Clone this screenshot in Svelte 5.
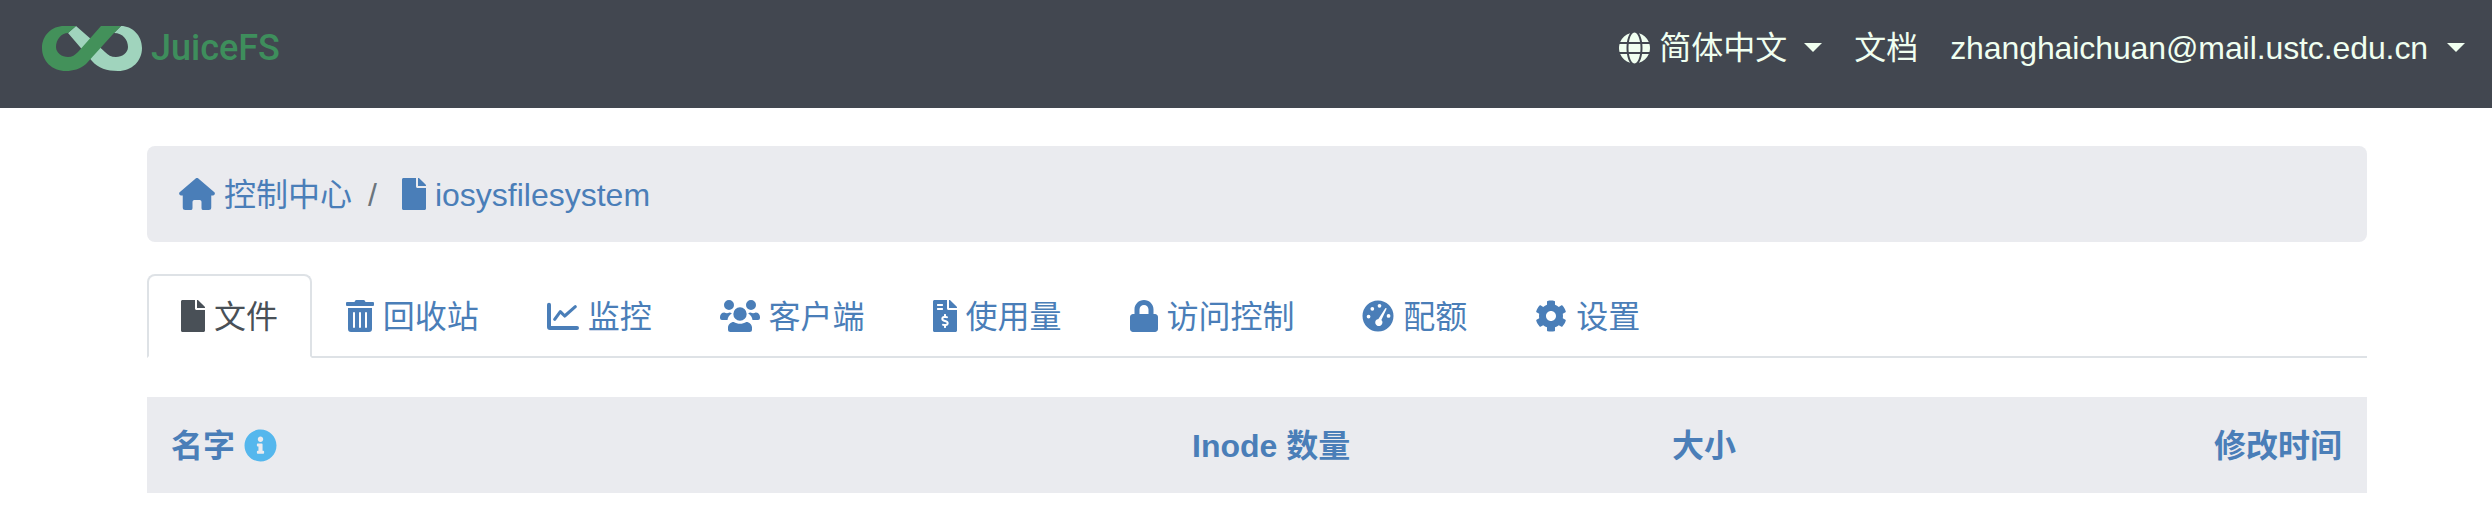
<script>
  const icons = {
    home: [576, "M262 10a40 40 0 0 1 52 0L566 228a30 30 0 0 1-20 50H516V472a40 40 0 0 1-40 40H390a30 30 0 0 1-30-30V380a30 30 0 0 0-30-30H246a30 30 0 0 0-30 30V482a30 30 0 0 1-30 30H100a40 40 0 0 1-40-40V278H30a30 30 0 0 1-20-50Z"],
    file: [384, "M224 136V0H24C10.7 0 0 10.7 0 24v464c0 13.3 10.7 24 24 24h336c13.3 0 24-10.7 24-24V160H248c-13.2 0-24-10.8-24-24zm160-14.1v6.1H256V0h6.1c6.4 0 12.5 2.5 17 7l97.9 98c4.5 4.5 7 10.6 7 16.9z"],
    trash: [448, "M32 464a48 48 0 0 0 48 48h288a48 48 0 0 0 48-48V128H32zm272-256a16 16 0 0 1 32 0v224a16 16 0 0 1-32 0zm-96 0a16 16 0 0 1 32 0v224a16 16 0 0 1-32 0zm-96 0a16 16 0 0 1 32 0v224a16 16 0 0 1-32 0zM432 32H312l-9.4-18.7A24 24 0 0 0 281.1 0H166.8a23.72 23.72 0 0 0-21.4 13.3L136 32H16A16 16 0 0 0 0 48v32a16 16 0 0 0 16 16h416a16 16 0 0 0 16-16V48a16 16 0 0 0-16-16z"],
    chart: [512, "M32 43a32 32 0 0 1 32 32V416H480a32 32 0 0 1 0 64H48a48 48 0 0 1-48-48V75a32 32 0 0 1 32-32z", "M123 309L213 187L283 256L453 107"],
    users: [640, "M144 0a80 80 0 1 0 0 160a80 80 0 1 0 0-160zM496 0a80 80 0 1 0 0 160a80 80 0 1 0 0-160zM320 117a107 107 0 1 0 0 214a107 107 0 1 0 0-214zM168 512a40 40 0 0 1-40-40V440C128 390 170 350 220 350C250 368 285 378 320 378C355 378 390 368 420 350C470 350 512 390 512 440V472a40 40 0 0 1-40 40ZM32 320a32 32 0 0 1-32-32V270C0 230 30 200 70 200C95 215 125 215 150 200C165 200 178 205 190 212C150 240 125 275 120 320ZM608 320a32 32 0 0 0 32-32V270C640 230 610 200 570 200C545 215 515 215 490 200C475 200 462 205 450 212C490 240 515 275 520 320Z"],
    invoice: [384, "M377 105L279.1 7c-4.5-4.5-10.6-7-17-7H256v128h128v-6.1c0-6.3-2.5-12.4-7-16.9zm-153 31V0H24C10.7 0 0 10.7 0 24v464c0 13.3 10.7 24 24 24h336c13.3 0 24-10.7 24-24V160H248c-13.2 0-24-10.8-24-24zM64 72c0-4.42 3.58-8 8-8h80c4.42 0 8 3.58 8 8v16c0 4.42-3.58 8-8 8H72c-4.42 0-8-3.58-8-8V72zm0 80v-16c0-4.42 3.58-8 8-8h80c4.42 0 8 3.58 8 8v16c0 4.42-3.58 8-8 8H72c-4.42 0-8-3.58-8-8zm144 263.88V440c0 4.42-3.58 8-8 8h-16c-4.42 0-8-3.58-8-8v-24.29c-11.29-.58-22.27-4.52-31.37-11.35-3.9-2.93-4.1-8.77-.57-12.14l11.75-11.21c2.77-2.64 6.89-2.76 10.13-.73 3.87 2.42 8.26 3.72 12.82 3.72h28.11c6.5 0 11.8-5.92 11.8-13.19 0-5.95-3.61-11.19-8.77-12.73l-45-13.5c-18.59-5.58-31.58-23.42-31.58-43.39 0-24.52 19.05-44.44 42.67-45.07V232c0-4.42 3.58-8 8-8h16c4.42 0 8 3.58 8 8v24.29c11.29.58 22.27 4.51 31.37 11.35 3.9 2.93 4.1 8.77.57 12.14l-11.75 11.21c-2.77 2.64-6.89 2.76-10.13.73-3.87-2.43-8.26-3.72-12.82-3.72h-28.11c-6.5 0-11.8 5.92-11.8 13.19 0 5.95 3.61 11.19 8.77 12.73l45 13.5c18.59 5.58 31.58 23.42 31.58 43.39 0 24.53-19.05 44.44-42.67 45.07z"],
    lock: [448, "M400 224h-24v-72C376 68.2 307.8 0 224 0S72 68.2 72 152v72H48c-26.5 0-48 21.5-48 48v192c0 26.5 21.5 48 48 48h352c26.5 0 48-21.5 48-48V272c0-26.5-21.5-48-48-48zm-104 0H152v-72c0-39.7 32.3-72 72-72s72 32.3 72 72v72z"],
    gauge: [512, "M256 8a248 248 0 1 0 0 496a248 248 0 1 0 0-496zM105 235a30 30 0 1 0 0 60a30 30 0 1 0 0-60zM165 110a30 30 0 1 0 0 60a30 30 0 1 0 0-60zM280 62a30 30 0 1 0 0 60a30 30 0 1 0 0-60zM425 225a30 30 0 1 0 0 60a30 30 0 1 0 0-60zM370 135L262 302A58 58 0 1 0 310 318L392 145A12 12 0 0 0 370 135z"],
    cog: [512, "M487.4 315.7l-42.6-24.6c4.3-23.2 4.3-47 0-70.2l42.6-24.6c4.9-2.8 7.1-8.6 5.5-14-11.1-35.6-30-67.8-54.7-94.6-3.8-4.1-10-5.1-14.8-2.3L380.8 110c-17.9-15.4-38.5-27.3-60.8-35.1V25.8c0-5.6-3.9-10.5-9.4-11.7-36.7-8.2-74.3-7.8-109.2 0-5.5 1.2-9.4 6.1-9.4 11.7V75c-22.2 7.9-42.8 19.8-60.8 35.1L88.7 85.5c-4.9-2.8-11-1.9-14.8 2.3-24.7 26.7-43.6 58.9-54.7 94.6-1.7 5.4.6 11.2 5.5 14L67.3 221c-4.3 23.2-4.3 47 0 70.2l-42.6 24.6c-4.9 2.8-7.1 8.6-5.5 14 11.1 35.6 30 67.8 54.7 94.6 3.8 4.1 10 5.1 14.8 2.3l42.6-24.6c17.9 15.4 38.5 27.3 60.8 35.1v49.2c0 5.6 3.9 10.5 9.4 11.7 36.7 8.2 74.3 7.8 109.2 0 5.5-1.2 9.4-6.1 9.4-11.7v-49.2c22.2-7.9 42.8-19.8 60.8-35.1l42.6 24.6c4.9 2.8 11 1.9 14.8-2.3 24.7-26.7 43.6-58.9 54.7-94.6 1.5-5.5-.7-11.3-5.6-14.1zM256 336c-44.1 0-80-35.9-80-80s35.9-80 80-80 80 35.9 80 80-35.9 80-80 80z"],
    info: [512, "M256 8C119.043 8 8 119.083 8 256c0 136.997 111.043 248 248 248s248-111.003 248-248C504 119.083 392.957 8 256 8zm0 110c23.196 0 42 18.804 42 42s-18.804 42-42 42-42-18.804-42-42 18.804-42 42-42zm56 254c0 6.627-5.373 12-12 12h-88c-6.627 0-12-5.373-12-12v-24c0-6.627 5.373-12 12-12h12v-64h-12c-6.627 0-12-5.373-12-12v-24c0-6.627 5.373-12 12-12h64c6.627 0 12 5.373 12 12v100h12c6.627 0 12 5.373 12 12v24z"],
    globe: [496, "M336.5 160C322 70.7 287.8 8 248 8s-74 62.7-88.5 152h177zM152 256c0 22.2 1.2 43.5 3.3 64h185.3c2.1-20.5 3.3-41.8 3.3-64s-1.2-43.5-3.3-64H155.3c-2.1 20.5-3.3 41.8-3.3 64zm324.7-96c-28.6-67.9-86.5-120.4-158-141.6 24.4 33.8 41.2 84.7 50 141.6h108zM177.2 18.4C105.8 39.6 47.8 92.1 19.3 160h108c8.7-56.9 25.5-107.8 49.9-141.6zM487.4 192H372.7c2.1 21 3.3 42.5 3.3 64s-1.2 43-3.3 64h114.6c5.5-20.5 8.6-41.8 8.6-64s-3.1-43.5-8.5-64zM120 256c0-21.5 1.2-43 3.3-64H8.6C3.2 212.5 0 233.8 0 256s3.2 43.5 8.6 64h114.6c-2-21-3.2-42.5-3.2-64zm39.5 96c14.5 89.3 48.7 152 88.5 152s74-62.7 88.5-152h-177zm159.3 141.6c71.4-21.2 129.4-73.7 158-141.6h-108c-8.8 56.9-25.6 107.8-50 141.6zM19.3 352c28.6 67.9 86.5 120.4 158 141.6-24.4-33.8-41.2-84.7-50-141.6h-108z"],
  };

  const tabs = [
    { icon: "file", label: "文件", active: true },
    { icon: "trash", label: "回收站" },
    { icon: "chart", label: "监控" },
    { icon: "users", label: "客户端" },
    { icon: "invoice", label: "使用量" },
    { icon: "lock", label: "访问控制" },
    { icon: "gauge", label: "配额" },
    { icon: "cog", label: "设置" },
  ];
</script>

{#snippet icon(name)}
  <svg class="icon" viewBox="0 0 {icons[name][0]} 512" width={icons[name][0] / 16} height="32" fill="currentColor" fill-rule="evenodd" aria-hidden="true">
    <path d={icons[name][1]} />
    {#if icons[name][2]}
      <path class="line" d={icons[name][2]} />
    {/if}
  </svg>
{/snippet}

<nav class="navbar">
  <a class="brand" href="#top">
    <svg class="logo" viewBox="0 0 100 46" width="100" height="46" aria-hidden="true">
      <path fill="#a0d4bd" d="M34 1L26 8L50 36C56 43 65 46 76 46C90 46 100 36 100 23C100 10 90 1 79 1L72 8C81 8 86 15 86 22C86 28 80 32 74 32C69 32 66 30 63 27L50 15Z" />
      <path fill="#43915a" d="M22 1L34 1L26 8C19 8 14 15 14 22C14 28 20 32 26 32C30 32 33 30 36 27L59 1L79 1L72 8L44 39C38 44 31 46 24 46C10 46 0 36 0 23C0 10 10 1 22 1Z" />
    </svg>
    <span>JuiceFS</span>
  </a>
  <ul class="menu">
    <li class="lang">{@render icon("globe")}<span>简体中文</span><i class="caret"></i></li>
    <li>文档</li>
    <li class="user">zhanghaichuan@mail.ustc.edu.cn<i class="caret"></i></li>
  </ul>
</nav>

<main class="content">
  <div class="breadcrumb">
    <a href="#home">{@render icon("home")}<span class="label">控制中心</span></a>
    <span class="sep label">/</span>
    <a href="#fs">{@render icon("file")}<span class="label">iosysfilesystem</span></a>
  </div>

  <ul class="tabs">
    {#each tabs as tab}
      <li class="tab" class:active={tab.active}>{@render icon(tab.icon)}<span class="label">{tab.label}</span></li>
    {/each}
  </ul>

  <div class="thead">
    <div class="name"><span class="label">名字</span><span class="hint">{@render icon("info")}</span></div>
    <div class="label">Inode 数量</div>
    <div class="label">大小</div>
    <div class="label time">修改时间</div>
  </div>
</main>

<style>
  :global(body) {
    background: #fff;
    font-family: "Liberation Sans", "Noto Sans CJK SC", sans-serif;
    font-size: 32px;
    line-height: 48px;
  }

  a {
    color: #4a7eb8;
    text-decoration: none;
  }

  ul {
    list-style: none;
    margin: 0;
    padding: 0;
  }

  .icon {
    display: block;
    flex: none;
  }

  .line {
    fill: none;
    stroke: currentColor;
    stroke-width: 50;
    stroke-linecap: round;
    stroke-linejoin: round;
  }

  /* CJK glyphs sit a pixel high in this box */
  .label {
    padding-top: 2px;
    line-height: 46px;
  }

  .navbar {
    display: flex;
    align-items: center;
    justify-content: space-between;
    box-sizing: border-box;
    height: 108px;
    padding: 0 27px 13px 42px;
    background: #424750;
  }

  .brand {
    display: flex;
    align-items: center;
    gap: 9px;
    font-family: Roboto, sans-serif;
    font-size: 36px;
    font-weight: 500;
    color: #3e8e5c;
  }

  .menu {
    display: flex;
    gap: 32px;
    color: #f0fff0;
  }

  .menu li {
    display: flex;
    align-items: center;
  }

  .user {
    letter-spacing: -0.1px;
  }

  .user .caret {
    margin-left: 19px;
  }

  .lang span {
    margin-left: 9px;
  }

  .caret {
    width: 0;
    height: 0;
    margin-left: 17px;
    border-top: 9px solid #f0fff0;
    border-left: 9px solid transparent;
    border-right: 9px solid transparent;
  }

  .content {
    width: 2220px;
    margin: 38px 0 0 147px;
  }

  .breadcrumb {
    display: flex;
    align-items: center;
    padding: 24px 32px;
    border-radius: 8px;
    background: #eaebef;
  }

  .breadcrumb a {
    display: flex;
    align-items: center;
    gap: 9px;
  }

  .sep {
    margin: 0 25px 0 16px;
    color: #6c757d;
  }

  .tabs {
    display: flex;
    margin-top: 32px;
    border-bottom: 2px solid #dee2e6;
  }

  .tab {
    display: flex;
    align-items: center;
    gap: 8.9px;
    margin-bottom: -2px;
    padding: 16px 32px;
    border: 2px solid transparent;
    border-radius: 8px 8px 0 0;
    color: #4a7eb8;
  }

  .tab.active {
    border-color: #dee2e6 #dee2e6 #fff;
    background: #fff;
    color: #495057;
  }

  .thead {
    display: grid;
    grid-template-columns: 1021px 480px 1fr auto;
    margin-top: 39px;
    padding: 24px 25px 24px 24px;
    background: #eaebef;
    color: #4a7eb8;
    font-weight: 700;
  }

  .name {
    display: flex;
    align-items: center;
    gap: 9px;
  }

  .hint {
    color: #55b7ed;
  }

  .hint .icon {
    width: 33px;
    height: 33px;
  }

  .time {
    text-align: right;
  }
</style>
